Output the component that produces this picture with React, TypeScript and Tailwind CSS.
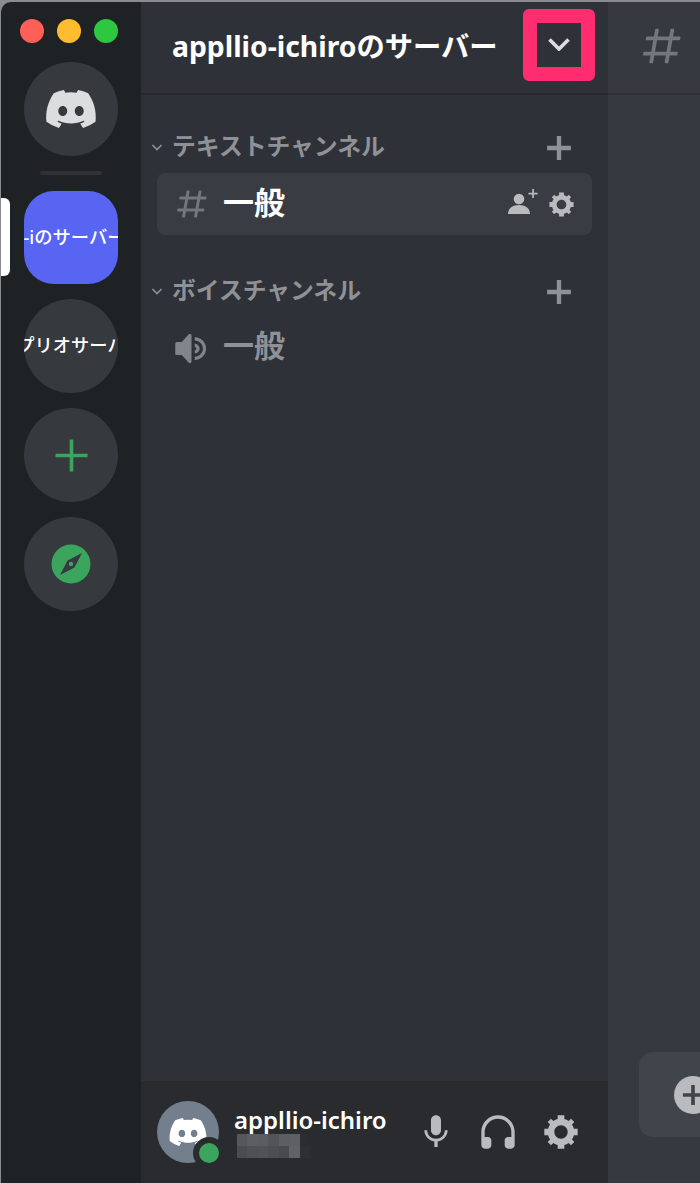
const jp = "font-['Noto_Sans','Noto_Sans_CJK_JP',sans-serif]";

const GEAR =
  'M19.738 10H22V14H19.739C19.498 14.931 19.1 15.798 18.565 16.564L20 18L18 20L16.565 18.564C15.797 19.099 14.932 19.498 14 19.738V22H10V19.738C9.069 19.498 8.203 19.099 7.436 18.564L6 20L4 18L5.436 16.564C4.901 15.799 4.502 14.932 4.262 14H2V10H4.262C4.502 9.068 4.9 8.202 5.436 7.436L4 6L6 4L7.436 5.436C8.202 4.9 9.068 4.502 10 4.262V2H14V4.261C14.932 4.502 15.797 4.9 16.565 5.435L18 3.999L20 5.999L18.564 7.436C19.099 8.202 19.498 9.069 19.738 10ZM12 16C14.2091 16 16 14.2091 16 12C16 9.79086 14.2091 8 12 8C9.79086 8 8 9.79086 8 12C8 14.2091 9.79086 16 12 16Z';
const HASH =
  'M5.88657 21C5.57547 21 5.3399 20.7189 5.39427 20.4126L6.00001 17H2.59511C2.28449 17 2.04905 16.7198 2.10259 16.4138L2.27759 15.4138C2.31946 15.1746 2.52722 15 2.77011 15H6.35001L7.41001 9H4.00511C3.69449 9 3.45905 8.71977 3.51259 8.41381L3.68759 7.41381C3.72946 7.17456 3.93722 7 4.18011 7H7.76001L8.39677 3.41262C8.43914 3.17391 8.64664 3 8.88907 3H9.87344C10.1845 3 10.4201 3.28107 10.3657 3.58738L9.76001 7H15.76L16.3968 3.41262C16.4391 3.17391 16.6466 3 16.8891 3H17.8734C18.1845 3 18.4201 3.28107 18.3657 3.58738L17.76 7H21.1649C21.4755 7 21.711 7.28023 21.6574 7.58619L21.4824 8.58619C21.4406 8.82544 21.2328 9 20.9899 9H17.41L16.35 15H19.7549C20.0655 15 20.301 15.2802 20.2474 15.5862L20.0724 16.5862C20.0306 16.8254 19.8228 17 19.5799 17H16L15.3632 20.5874C15.3209 20.8261 15.1134 21 14.8709 21H13.8866C13.5755 21 13.3399 20.7189 13.3943 20.4126L14 17H8.00001L7.36325 20.5874C7.32088 20.8261 7.11337 21 6.87094 21H5.88657ZM9.41045 9L8.35045 15H14.3504L15.4104 9H9.41045Z';
const SPEAKER =
  'M11.383 3.07904C11.009 2.92504 10.579 3.01004 10.293 3.29604L6 8.00204H3C2.45 8.00204 2 8.45304 2 9.00204V15.002C2 15.552 2.45 16.002 3 16.002H6L10.293 20.71C10.579 20.996 11.009 21.082 11.383 20.927C11.757 20.772 12 20.407 12 20.002V4.00204C12 3.59904 11.757 3.23204 11.383 3.07904ZM14 5.00195V7.00195C16.757 7.00195 19 9.24595 19 12.002C19 14.759 16.757 17.002 14 17.002V19.002C17.86 19.002 21 15.863 21 12.002C21 8.14295 17.86 5.00195 14 5.00195ZM14 9.00195C15.654 9.00195 17 10.349 17 12.002C17 13.657 15.654 15.002 14 15.002V13.002C14.551 13.002 15 12.553 15 12.002C15 11.451 14.551 11.002 14 11.002V9.00195Z';
const MIC =
  'M14.99 11C14.99 12.66 13.66 14 12 14C10.34 14 9 12.66 9 11V5C9 3.34 10.34 2 12 2C13.66 2 15 3.34 15 5L14.99 11ZM12 16.1C14.76 16.1 17.3 14 17.3 11H19C19 14.42 16.28 17.24 13 17.72V21H11V17.72C7.72 17.23 5 14.41 5 11H6.7C6.7 14 9.24 16.1 12 16.1Z';
const HEADPHONES =
  'M12 2.00305C6.486 2.00305 2 6.48805 2 12.0031V20.0031C2 21.1071 2.895 22.0031 4 22.0031H6C7.104 22.0031 8 21.1071 8 20.0031V17.0031C8 15.8991 7.104 15.0031 6 15.0031H4V12.0031C4 7.59105 7.589 4.00305 12 4.00305C16.411 4.00305 20 7.59105 20 12.0031V15.0031H18C16.896 15.0031 16 15.8991 16 17.0031V20.0031C16 21.1071 16.896 22.0031 18 22.0031H20C21.104 22.0031 22 21.1071 22 20.0031V12.0031C22 6.48805 17.514 2.00305 12 2.00305Z';
const LOGO =
  'M524.531 69.836a1.5 1.5 0 0 0-.764-.7A485.065 485.065 0 0 0 404.081 32.03a1.816 1.816 0 0 0-1.923.91 337.461 337.461 0 0 0-14.9 30.6 447.848 447.848 0 0 0-134.426 0 309.541 309.541 0 0 0-15.135-30.6 1.89 1.89 0 0 0-1.924-.91 483.689 483.689 0 0 0-119.688 37.107 1.712 1.712 0 0 0-.788.676C39.068 183.651 18.186 294.69 28.43 404.354a2.016 2.016 0 0 0 .765 1.375 487.666 487.666 0 0 0 146.825 74.189 1.9 1.9 0 0 0 2.063-.676A348.2 348.2 0 0 0 208.12 430.4a1.86 1.86 0 0 0-1.019-2.588 321.173 321.173 0 0 1-45.868-21.853 1.885 1.885 0 0 1-.185-3.126 251.047 251.047 0 0 0 9.109-7.137 1.819 1.819 0 0 1 1.9-.256c96.229 43.917 200.41 43.917 295.5 0a1.812 1.812 0 0 1 1.924.233 234.533 234.533 0 0 0 9.132 7.16 1.884 1.884 0 0 1-.162 3.126 301.407 301.407 0 0 1-45.89 21.83 1.875 1.875 0 0 0-1 2.611 391.055 391.055 0 0 0 30.014 48.815 1.864 1.864 0 0 0 2.063.7A486.048 486.048 0 0 0 610.7 405.729a1.882 1.882 0 0 0 .765-1.352c12.264-126.783-20.532-236.912-86.934-334.541zM222.491 337.58c-28.972 0-52.844-26.587-52.844-59.239s23.409-59.241 52.844-59.241c29.665 0 53.306 26.82 52.843 59.239 0 32.654-23.41 59.241-52.843 59.241zm195.38 0c-28.971 0-52.843-26.587-52.843-59.239s23.409-59.241 52.843-59.241c29.667 0 53.307 26.82 52.844 59.239 0 32.654-23.177 59.241-52.844 59.241z';
const PLUS_THIN = 'M10.75 1h2.500v9.750H23v2.500h-9.750V23h-2.500v-9.750H1v-2.500h9.750z';
const PLUS_THICK = 'M10 1h4v9h9v4h-9v9h-4v-9H1v-4h9z';

function Icon({ d, className }: { d: string; className: string }) {
  return (
    <svg viewBox="0 0 24 24" className={className} fill="currentColor">
      <path fillRule="evenodd" clipRule="evenodd" d={d} />
    </svg>
  );
}

function Logo({ className }: { className: string }) {
  return (
    <svg viewBox="0 0 640 512" className={className} fill="currentColor">
      <path d={LOGO} />
    </svg>
  );
}

function Caret() {
  return (
    <svg viewBox="0 0 12 12" className="w-[12px] h-[12px] text-[#8e9297] mr-[9px] shrink-0" fill="none" stroke="currentColor" strokeWidth="1.6">
      <path d="M1.5 4l4.500 4.500L10.500 4" />
    </svg>
  );
}

function RailCircle({ children, className = '' }: { children: React.ReactNode; className?: string }) {
  return (
    <div className={`w-[94px] h-[94px] shrink-0 rounded-full bg-[#36393e] flex items-center justify-center overflow-hidden ${className}`}>
      {children}
    </div>
  );
}

function ServerRail() {
  return (
    <aside className="relative w-[140px] shrink-0 bg-[#1f2225] flex flex-col items-center">
      <div className="flex gap-[13px] mt-[17px] ml-[-4px]">
        <span className="w-[24px] h-[24px] rounded-full bg-[#ff5f57]" />
        <span className="w-[24px] h-[24px] rounded-full bg-[#febc2e]" />
        <span className="w-[24px] h-[24px] rounded-full bg-[#2ec840]" />
      </div>
      <RailCircle className="mt-[19px]">
        <Logo className="w-[54px] h-[54px] text-[#dcddde]" />
      </RailCircle>
      <div className="w-[62px] h-[4px] rounded-full bg-[#2f3136] mt-[15px]" />
      <span className="absolute left-[-1px] top-[196px] w-[10px] h-[78px] rounded-r-[6px] bg-white" />
      <div className="mt-[16px] w-[94px] h-[93px] rounded-[30px] bg-[#5865f2] flex items-center justify-center overflow-hidden">
        <span className={`${jp} shrink-0 pl-[7px] mb-[2px] whitespace-nowrap text-white text-[18.3px] font-medium`}>-iのサーバー</span>
      </div>
      <RailCircle className="mt-[15px]">
        <span className={`${jp} shrink-0 mb-[2px] whitespace-nowrap text-white text-[18.3px] font-medium`}>アプリオサーバー</span>
      </RailCircle>
      <RailCircle className="mt-[15px]">
        <Icon d={PLUS_THIN} className="w-[35px] h-[35px] text-[#3ba55d]" />
      </RailCircle>
      <RailCircle className="mt-[15px]">
        <svg viewBox="0 0 40 40" className="w-[40px] h-[40px]">
          <circle cx="20" cy="20" r="19.500" fill="#3ba55d" />
          <path fillRule="evenodd" fill="#36393f" d="M31 9L23.500 23.500 9 31l7.500-14.500zM20 17.800a2.200 2.200 0 1 0 0 4.400 2.200 2.200 0 0 0 0-4.400z" />
        </svg>
      </RailCircle>
    </aside>
  );
}

function Category({ title, className = '' }: { title: string; className?: string }) {
  return (
    <div className={`flex items-center pl-[10px] pr-[36px] h-[32px] ${className}`}>
      <Caret />
      <span className={`${jp} text-[23.8px] font-bold leading-none text-[#8e9297] whitespace-nowrap`}>{title}</span>
      <Icon d={PLUS_THICK} className="w-[26px] h-[26px] mt-[2px] text-[#8e9297] ml-auto" />
    </div>
  );
}

const MOSAIC = [
  'bg-[#55575b]', 'bg-[#5c5e62]', 'bg-[#5a5c60]', 'bg-[#525458]', 'bg-[#5c5e62]', 'bg-[#5e6064]', 'bg-[#2a2c30]',
  'bg-[#4a4c50]', 'bg-[#4e5054]', 'bg-[#505256]', 'bg-[#4c4e52]', 'bg-[#484a4e]', 'bg-[#606266]', 'bg-[#2d2f33]',
];

function UserPanel() {
  return (
    <div className="h-[102px] shrink-0 bg-[#292b2f] flex items-center pl-[16px]">
      <div className="relative w-[62px] h-[62px] shrink-0 rounded-full bg-[#747f8d] flex items-center justify-center">
        <Logo className="w-[40px] h-[40px] text-white" />
        <span className="absolute left-[36px] top-[36px] w-[32px] h-[32px] rounded-full bg-[#292b2f] flex items-center justify-center">
          <span className="w-[20px] h-[20px] rounded-full bg-[#3ba55d]" />
        </span>
      </div>
      <div className="ml-[15px] w-[182px] shrink-0">
        <div className={`${jp} text-[24px] leading-[28px] font-semibold text-white whitespace-nowrap`}>appllio-ichiro</div>
        <div className="grid grid-cols-7 w-[73px] h-[24px] ml-[3px]">
          {MOSAIC.map((c, i) => (
            <span key={i} className={c} />
          ))}
        </div>
      </div>
      <Icon d={MIC} className="w-[40px] h-[40px] text-[#b9bbbe] shrink-0" />
      <Icon d={HEADPHONES} className="w-[40px] h-[40px] text-[#b9bbbe] shrink-0 ml-[22px]" />
      <Icon d={GEAR} className="w-[40px] h-[40px] text-[#b9bbbe] shrink-0 ml-[23px]" />
    </div>
  );
}

function ChannelSidebar() {
  return (
    <section className="w-[467px] shrink-0 bg-[#2f3138] flex flex-col">
      <header className="h-[93px] shrink-0 border-b-2 border-[#26282c] flex items-center pl-[31px] pr-[13px]">
        <h1 className={`${jp} text-[28.3px] font-bold mb-[2px] text-white whitespace-nowrap`}>appllio-ichiroのサーバー</h1>
        <div className="ml-auto w-[72px] h-[72px] shrink-0 rounded-[6px] border-[14px] border-[#ff2d6f] flex items-center justify-center mt-[-6px]">
          <svg viewBox="0 0 22 13" className="w-[22px] h-[13px] text-[#dcddde]" fill="none" stroke="currentColor" strokeWidth="3.6">
            <path d="M1.500 1.500L11 11l9.500-9.500" />
          </svg>
        </div>
      </header>
      <div className="flex-1 min-h-0">
        <Category title="テキストチャンネル" className="mt-[36px]" />
        <div className="mx-[16px] mt-[10px] h-[62px] rounded-[8px] bg-[#393c43] flex items-center pl-[17px] pr-[17px]">
          <Icon d={HASH} className="w-[36px] h-[36px] text-[#72767d] shrink-0" />
          <span className={`${jp} ml-[13px] mb-[4px] text-[31px] font-bold text-white leading-none`}>一般</span>
          <svg viewBox="0 0 30 25" className="w-[30px] h-[25px] mb-[5px] ml-auto text-[#b9bbbe]" fill="currentColor">
            <circle cx="11" cy="10" r="5.300" />
            <path d="M0 25c0-6 5-9 11-9s11 3 11 9z" />
            <path d="M24.200 0h1.700v3.700h3.700v1.700h-3.700v3.700h-1.700V5.400h-3.700V3.700h3.700z" />
          </svg>
          <Icon d={GEAR} className="w-[29px] h-[29px] text-[#b9bbbe] ml-[9px] mr-[-1px]" />
        </div>
        <Category title="ボイスチャンネル" className="mt-[40px]" />
        <div className="mx-[16px] mt-[10px] h-[62px] flex items-center pl-[15px]">
          <Icon d={SPEAKER} className="w-[39px] h-[39px] text-[#80848b] shrink-0" />
          <span className={`${jp} ml-[12px] mb-[5px] text-[31px] font-bold text-[#8e9297] leading-none`}>一般</span>
        </div>
      </div>
      <UserPanel />
    </section>
  );
}

function ChatPane() {
  return (
    <main className="flex-1 min-w-0 bg-[#36393f] flex flex-col overflow-hidden">
      <div className="h-[93px] shrink-0 border-b-2 border-[#2e3035] pl-[31px] flex items-center">
        <Icon d={HASH} className="w-[46px] h-[46px] mb-[4px] text-[#72767d] shrink-0" />
      </div>
      <div className="flex-1" />
      <div className="ml-[31px] mb-[46px] h-[85px] w-[120px] shrink-0 rounded-l-[14px] bg-[#40444b] flex items-center pl-[35px]">
        <span className="w-[38px] h-[38px] shrink-0 rounded-full bg-[#b9bbbe] flex items-center justify-center">
          <Icon d={PLUS_THICK} className="w-[22px] h-[22px] text-[#40444b]" />
        </span>
      </div>
    </main>
  );
}

export default function App() {
  return (
    <div className="w-[700px] h-[1183px] bg-[#8a8b8e] pt-[2px] pl-[1px] overflow-hidden">
      <div className="h-full flex rounded-tl-[10px] overflow-hidden">
        <ServerRail />
        <ChannelSidebar />
        <ChatPane />
      </div>
    </div>
  );
}
